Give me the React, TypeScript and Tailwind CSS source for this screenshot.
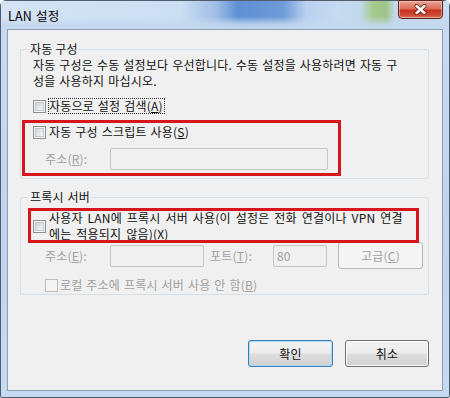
import React from "react";

function Box({ disabled }: { disabled?: boolean }) {
  if (disabled) {
    return <span className="block w-[13px] h-[13px] shrink-0 border border-[#bcbcbc] bg-[#f4f4f4]" />;
  }
  return (
    <span className="block w-[13px] h-[13px] shrink-0 border border-[#8e8f8f] bg-[#f4f4f4] p-[1px]">
      <span className="block w-full h-full border border-[#c4c8cc] bg-[linear-gradient(135deg,#d0d3d8_0%,#e6e7e9_60%,#f4f4f5_100%)]" />
    </span>
  );
}

function Input({ w, value }: { w: string; value?: string }) {
  return (
    <div className={`${w} h-[22px] border border-[#c3c6c9] rounded-[2px] bg-[#f0f0f0] text-[#a0a0a0] leading-[20px] pl-[3px]`}>
      {value}
    </div>
  );
}

export default function App() {
  return (
    <div className="w-[450px] h-[398px] overflow-hidden font-['Noto_Sans_CJK_KR',sans-serif] text-[12px] tracking-[0.2px] [word-spacing:1px] text-[#111]">
      <div className="relative w-[450px] h-[398px] border border-[#4f5d6c] rounded-t-[6px] rounded-b-[2px] bg-[linear-gradient(180deg,#c8dbf1_0%,#c0d5ed_60%,#c6daf0_100%)] flex flex-col">
        {/* title bar */}
        <div className="h-[28px] flex items-start justify-between pr-[6px] bg-[linear-gradient(180deg,rgba(255,255,255,0)_0%,rgba(255,255,255,0)_55%,rgba(196,216,239,0.9)_85%),linear-gradient(90deg,#d4e3f5_0%,#cddff3_40%,#9fbde5_48%,#5f90d3_53%,#6e9bd8_63%,#b9d0ee_68%,#c7dbf1_75%,#c3d9ec_80%,#a7ca8f_83%,#9fc487_86%,#c2d8ea_88%,#c8dbf1_100%)]">
          <span className="pl-[7px] pt-[7px] leading-[16px] text-[12.5px] text-black">LAN 설정</span>
          <div className="w-[45px] h-[19px] -mt-[1px] rounded-b-[4px] border border-[#5d2220] bg-[linear-gradient(180deg,#eaa594_0%,#dc6b58_45%,#c6331f_55%,#cf4d3a_85%,#de7a63_100%)] shadow-[inset_0_0_0_1px_rgba(255,220,210,0.5)] flex items-center justify-center">
            <svg width="13" height="11" viewBox="0 0 13 11">
              <path d="M2.5 2 L10.5 9 M10.5 2 L2.5 9" stroke="#5a1d18" strokeWidth="4" strokeLinecap="round" />
              <path d="M2.5 2 L10.5 9 M10.5 2 L2.5 9" stroke="#ffffff" strokeWidth="2.4" strokeLinecap="round" />
            </svg>
          </div>
        </div>

        {/* content */}
        <div className="mx-[6px] h-[362px] border border-[#8d9fb3] bg-[#f0f0f0] flex flex-col pl-[12px] pr-[14px] pt-[12px]">
          <fieldset className="border border-[#d5dfe5] rounded-[3px] w-[409px]">
            <legend className="ml-[8px] px-[1px] leading-[14px] [word-spacing:0px]">자동 구성</legend>
            <div className="pl-[12px] pb-[8px]">
              <div className="leading-[16px] whitespace-nowrap pt-[1px]">
                <div>자동 구성은 수동 설정보다 우선합니다. 수동 설정을 사용하려면 자동 구</div>
                <div>성을 사용하지 마십시오.</div>
              </div>
              <div className="mt-[9px] h-[16px] flex items-center gap-[2px]">
                <Box />
                <span className="border border-dotted border-[#333] leading-[14px] pr-[1px] whitespace-nowrap">
                  자동으로 설정 검색(<u>A</u>)
                </span>
              </div>
              <div className="mt-[10px] h-[16px] flex items-center gap-[3px]">
                <Box />
                <span className="leading-[16px] whitespace-nowrap">
                  자동 구성 스크립트 사용(<u>S</u>)
                </span>
              </div>
              <div className="mt-[8px] flex items-center pl-[12px]">
                <span className="w-[65px] text-[#a0a0a0] whitespace-nowrap">
                  주소(<u>R</u>):
                </span>
                <Input w="w-[218px]" />
              </div>
            </div>
          </fieldset>

          <fieldset className="mt-[11px] border border-[#d5dfe5] rounded-[3px] w-[409px]">
            <legend className="ml-[8px] px-[1px] leading-[14px]">프록시 서버</legend>
            <div className="pl-[12px] pb-[1px]">
              <div className="mt-[6px] flex items-center gap-[3px]">
                <Box />
                <div className="leading-[16px] whitespace-nowrap [word-spacing:2px]">
                  <div>사용자 LAN에 프록시 서버 사용(이 설정은 전화 연결이나 VPN 연결</div>
                  <div>
                    에는 적용되지 않음)(<u>X</u>)
                  </div>
                </div>
              </div>
              <div className="h-[27px] flex items-center pl-[12px] text-[#a0a0a0]">
                <span className="w-[65px] whitespace-nowrap">
                  주소(<u>E</u>):
                </span>
                <Input w="w-[94px]" />
                <span className="ml-[6px] w-[63px] whitespace-nowrap">
                  포트(<u>T</u>):
                </span>
                <Input w="w-[54px]" value="80" />
                <div className="ml-[11px] w-[85px] h-[27px] rounded-[3px] border border-[#b5b9bd] bg-[#f4f4f4] flex items-center justify-center">
                  <span>
                    고급(<u>C</u>)
                  </span>
                </div>
              </div>
              <div className="mt-[8px] h-[16px] flex items-center gap-[2px] pl-[12px] text-[#a0a0a0]">
                <Box disabled />
                <span className="whitespace-nowrap">
                  로컬 주소에 프록시 서버 사용 안 함(<u>B</u>)
                </span>
              </div>
            </div>
          </fieldset>

          <div className="mt-[45px] flex justify-end gap-[12px] w-[409px]">
            <div className="w-[85px] h-[27px] rounded-[3px] border border-[#3a7fb0] shadow-[inset_0_0_0_1px_#a6dcf7] bg-[linear-gradient(180deg,#f3f3f3_0%,#ececec_48%,#dedede_52%,#d1d1d1_100%)] flex items-center justify-center text-[#111]">
              확인
            </div>
            <div className="w-[84px] h-[27px] rounded-[3px] border border-[#707070] shadow-[inset_0_0_0_1px_#fcfcfc] bg-[linear-gradient(180deg,#f3f3f3_0%,#ececec_48%,#dedede_52%,#d1d1d1_100%)] flex items-center justify-center text-[#111]">
              취소
            </div>
          </div>
        </div>

        {/* annotation boxes */}
        <div className="absolute left-[21px] top-[119px] w-[319px] h-[56px] border-[3px] border-[#d8141c]" />
        <div className="absolute left-[27px] top-[207px] w-[391px] h-[35px] border-[3px] border-[#d8141c]" />
      </div>
    </div>
  );
}
